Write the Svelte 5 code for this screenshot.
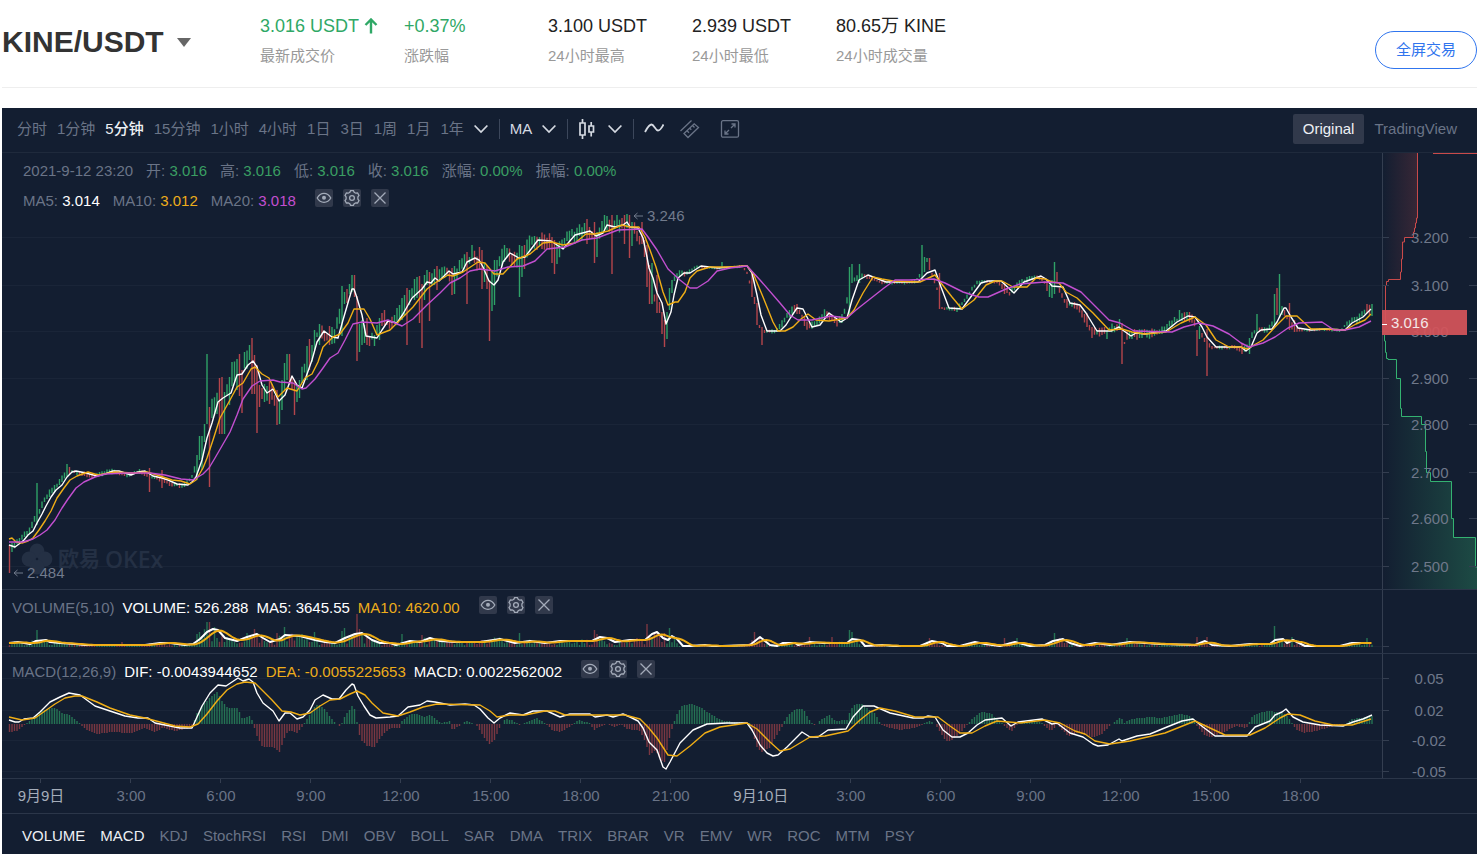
<script lang="ts">
  type Point = [number, number];

  const stats = [
    { value: '3.016 USDT', label: '最新成交价', up: true, arrow: true },
    { value: '+0.37%', label: '涨跌幅', up: true },
    { value: '3.100 USDT', label: '24小时最高' },
    { value: '2.939 USDT', label: '24小时最低' },
    { value: '80.65万 KINE', label: '24小时成交量' },
  ];

  const intervals = ['分时', '1分钟', '5分钟', '15分钟', '1小时', '4小时', '1日', '3日', '1周', '1月', '1年'];
  const views = ['Original', 'TradingView'];
  const indicators = ['VOLUME', 'MACD', 'KDJ', 'StochRSI', 'RSI', 'DMI', 'OBV', 'BOLL', 'SAR', 'DMA',
    'TRIX', 'BRAR', 'VR', 'EMV', 'WR', 'ROC', 'MTM', 'PSY'];
  const times = ['9月9日', '3:00', '6:00', '9:00', '12:00', '15:00', '18:00', '21:00',
    '9月10日', '3:00', '6:00', '9:00', '12:00', '15:00', '18:00'];
  const ohlc = [['开', '3.016'], ['高', '3.016'], ['低', '3.016'], ['收', '3.016'], ['涨幅', '0.00%'], ['振幅', '0.00%']];

  let interval = $state('5分钟');
  let view = $state('Original');
  let shown = $state(['VOLUME', 'MACD']);

  function toggle(name: string) {
    shown = shown.includes(name) ? shown.filter(n => n !== name) : [...shown, name];
  }

  // All series share one canvas space: x 2-1382, y 153-778
  const points = (s: string): Point[] => s.trim().split(/\s+/).map(p => p.split(',').map(Number) as Point);

  const ma5 = points(`9,545 15,547 19,544 24,540 28,535 33,531 37,523 42,514 46,506 51,497 56,490 62,485 67,477 72,472
    76,471 86,473 97,476 105,474 113,471 119,471 131,475 138,472 145,471 153,476 162,478 168,480 177,484 188,485
    192,482 196,477 202,460 207,438 212,423 218,402 223,398 231,393 237,375 242,374 248,365 253,361 257,367 262,385
    267,393 273,389 279,401 285,395 292,376 297,385 302,388 306,377 312,360 317,342 324,331 332,337 338,338 343,320
    352,289 354,289 357,298 362,315 366,336 377,338 382,330 388,321 397,323 403,314 412,298 422,289 427,282 431,283
    435,278 439,281 449,271 453,274 462,272 467,262 475,258 479,260 483,267 489,281 494,285 498,280 503,262 510,253
    519,258 525,257 538,240 551,241 563,249 575,235 590,231 596,236 603,233 607,225 615,227 623,225 627,222 630,227
    638,228 643,238 647,257 649,268 653,278 657,293 662,303 666,324 671,312 674,295 678,278 684,273 690,273 701,266
    718,268 747,266 752,273 757,295 761,315 767,331 780,331 786,325 791,317 797,308 803,309 808,319 812,327 820,325
    829,313 841,322 847,318 852,300 859,280 868,275 886,282 918,282 927,273 935,270 941,287 949,308 962,309 970,298
    981,283 988,281 1001,281 1014,293 1024,282 1041,276 1046,279 1052,286 1063,287 1070,303 1080,305 1086,313
    1097,331 1111,331 1119,327 1124,331 1131,336 1136,333 1145,334 1166,331 1177,322 1188,316 1195,317 1202,327
    1207,337 1216,347 1241,347 1246,351 1251,347 1257,333 1261,330 1272,329 1277,322 1284,308 1286,308 1291,317
    1298,328 1311,330 1325,329 1345,330 1352,323 1363,317 1371,309`);

  const ma10 = points(`9,539 12,538 16,542 22,543 28,541 33,538 39,530 45,521 51,511 57,498 64,488 70,480 77,476 88,472
    98,475 115,472 133,473 147,472 160,476 172,480 181,481 190,484 196,480 203,468 207,458 213,440 220,418 230,400
    237,387 243,383 251,369 255,367 262,374 269,378 278,397 287,388 297,391 305,378 312,374 318,362 323,347 333,337
    340,334 348,323 354,309 364,309 370,319 377,335 390,330 402,318 413,307 427,289 435,283 448,275 453,276 463,272
    478,262 485,263 494,274 503,274 517,259 530,254 543,243 552,242 563,245 575,243 586,234 595,234 608,231 622,225
    630,227 639,227 645,237 650,250 656,267 663,292 668,305 675,302 678,302 685,292 690,278 697,271 710,267 727,267
    747,266 753,273 763,297 773,322 778,331 785,331 793,327 801,319 808,314 816,320 829,321 847,318 854,310 863,293
    873,277 882,279 893,281 920,282 935,275 941,283 952,297 962,309 974,300 986,285 995,281 1002,281 1013,287
    1027,287 1036,278 1045,279 1052,282 1059,283 1066,292 1077,298 1093,313 1109,330 1122,329 1132,332 1145,334
    1166,332 1181,323 1195,317 1206,325 1216,340 1229,347 1240,347 1247,349 1254,345 1263,340 1275,327 1286,316
    1297,316 1311,329 1325,329 1345,330 1356,324 1365,320 1371,314`);

  const ma20 = points(`9,542 23,542 33,539 40,535 47,530 55,520 62,508 68,499 76,488 84,482 95,477 105,474 125,473
    150,473 165,475 181,479 193,480 203,474 209,468 215,458 230,432 237,415 243,399 252,386 260,381 273,380 280,382
    293,383 302,389 306,388 315,379 323,368 330,358 338,353 345,340 353,324 362,322 377,323 388,320 402,326 413,319
    427,305 440,293 450,283 460,278 470,271 480,269 495,271 508,267 523,266 535,261 547,249 565,247 582,240 597,238
    618,230 642,229 648,237 657,250 668,269 680,280 690,288 697,288 708,281 717,271 730,268 747,266 760,280 780,303
    790,315 798,320 812,320 831,316 847,318 856,310 870,299 884,288 895,280 909,280 934,279 945,283 963,292 979,297
    988,297 1006,289 1020,284 1045,282 1063,283 1081,292 1095,306 1109,320 1120,323 1134,331 1172,332 1184,327
    1199,323 1213,326 1229,334 1241,343 1249,347 1263,343 1275,337 1288,328 1299,323 1322,322 1334,330 1345,330
    1359,327 1371,321`);

  // typical candle half-height along the session
  const spread = points(`9,4 30,3 60,3 75,2 150,2 192,3 200,14 260,12 300,8 340,8 380,5 400,8 450,6 480,9 560,8 638,8
    672,5 690,1 750,1 765,1 785,4 820,4 850,4 865,2 875,1 920,2 945,1 965,3 985,1 1005,3 1040,2 1090,4 1150,5 1165,3
    1195,5 1212,1 1238,2 1265,3 1292,3 1302,1 1345,1 1352,4 1371,5`);

  // candles that stand out: x, high, low, colour
  const outliers = `9,545,573,r 11.5,543,552,g 36.5,483,525,g 66.5,464,476,g 69,467,474,r 149,468,492,r 161.5,470,488,r
    196.5,455,480,g 199,436,460,g 201.5,436,470,g 204,424,442,g 206.5,354,424,g 209,407,487,r 219,378,434,r
    221.5,377,434,r 224,392,434,g 229,377,405,g 236.5,359,390,g 239,354,396,r 241.5,370,413,r 249,345,360,g
    251.5,338,394,r 254,355,394,r 256.5,365,433,r 259,385,407,r 261.5,388,399,r 264,384,402,g 269,380,404,r
    276.5,390,425,r 279,400,424,g 281.5,380,410,g 284,363,390,g 286.5,354,380,g 289,354,385,r 291.5,376,390,r
    294,380,415,r 296.5,386,402,g 299,380,398,g 306.5,346,380,g 309,339,370,r 311.5,345,362,g 314,330,350,g
    319,324,345,g 329,326,345,r 331.5,327,344,g 341.5,286,336,g 344,292,304,g 346.5,289,303,r 349,284,294,g
    351.5,275,292,g 354,275,297,r 356.5,296,361,r 359,324,352,g 361.5,320,345,g 364,325,343,g 366.5,318,345,r
    369,336,346,r 374,335,346,g 379,318,340,g 381.5,313,326,r 384,310,325,r 399,305,320,g 401.5,298,320,g
    404,295,316,g 406.5,288,345,r 409,290,305,g 414,279,300,g 416.5,277,298,g 419,276,323,r 421.5,284,348,r
    424,275,300,g 426.5,270,285,g 429,272,321,r 434,269,285,g 436.5,266,290,r 451.5,268,295,r 454,266,294,g
    466.5,252,304,r 471.5,245,260,g 479,247,270,r 481.5,250,289,r 484,263,282,g 486.5,265,289,r 489,280,341,r
    491.5,272,311,g 494,260,305,g 504,245,262,g 519,245,297,g 521.5,246,277,g 524,245,269,r 539,237,246,g
    551.5,237,263,r 554,240,274,r 556.5,245,264,g 586.5,219,244,r 594,222,263,r 596.5,232,257,g 604,215,232,g
    606.5,216,230,g 611.5,215,274,r 616.5,215,228,g 624,215,244,r 626.5,214,228,g 629,215,258,r 631.5,222,246,g
    641.5,222,244,r 644,240,257,r 646.5,245,287,r 649,265,304,r 651.5,263,304,g 656.5,275,313,r 659,302,313,r
    661.5,312,334,r 664,320,347,r 666.5,312,339,g 669,288,310,g 671.5,280,293,g 721.5,262,268,g 751.5,273,297,r
    754,297,304,r 756.5,303,325,r 759,325,328,r 761.5,327,345,r 849,267,315,g 851.5,264,283,g 859,264,283,g
    921.5,245,280,g 924,257,272,g 926.5,258,262,g 929,258,270,r 939,273,309,r 941.5,307,309,r 1004,282,294,r
    1046.5,281,291,r 1049,285,297,g 1051.5,280,298,g 1054,262,294,g 1056.5,272,282,r 1066.5,299,308,r 1086.5,313,327,r
    1091.5,327,338,r 1106.5,331,339,g 1119,319,330,g 1121.5,323,364,r 1124,342,344,r 1179,310,320,g 1196.5,330,356,r
    1199,326,339,g 1206.5,329,376,r 1241.5,343,354,r 1249,338,354,g 1256.5,314,332,g 1274,294,325,g
    1276.5,288,315,r 1279,274,318,g 1281.5,306,315,g 1289,303,330,r 1294,320,332,r 1366.5,304,313,r 1371.5,304,316,g`;

  const volume5 = points(`9,643 18,642 30,644 36,641 46,640 50,642 60,643 75,644 85,645 145,645 160,643 170,643 185,645
    193,644 200,639 207,632 213,629 218,630 225,638 237,641 247,637 257,634 263,638 270,642 280,639 285,635 300,636
    315,640 325,642 335,643 345,638 355,634 362,633 372,640 380,643 390,643 396,645 410,641 420,642 430,638 440,641
    455,642 480,642 500,639 515,643 530,641 545,643 560,641 592,641 600,637 607,638 615,642 630,640 645,640 652,634
    657,632 663,638 668,640 672,636 677,639 683,646 690,646 705,645 712,646 722,646 750,645 760,637 770,645 777,646
    783,643 795,643 798,645 810,642 823,643 847,643 852,639 860,640 865,646 883,645 893,646 920,646 932,641 942,643
    947,646 960,646 975,642 985,644 1000,646 1015,642 1030,646 1045,645 1053,641 1063,639 1070,643 1080,646
    1095,643 1110,645 1130,642 1160,644 1195,645 1205,641 1212,645 1230,646 1250,644 1270,644 1275,640 1283,639
    1287,643 1293,640 1305,646 1340,646 1352,643 1371,643`);

  const volumeSpikes = `36.5,630,g 121.5,642,r 196.5,634,g 199,632,g 206.5,622,g 209,622,r 214,627,g 246.5,633,g 254,629,r
    276.5,633,r 284,627,g 301.5,634,g 314,632,g 341.5,631,g 344,628,g 356.5,614,r 359,629,r 401.5,634,g 421.5,635,r
    519,633,g 594,630,r 596.5,634,r 646.5,624,r 664,633,r 669,628,g 754,632,r 809,637,r 831.5,637,r 849,630,g
    851.5,632,g 929,638,r 1004,638,r 1016.5,638,g 1054,633,g 1126.5,638,g 1196.5,637,r 1206.5,637,r 1274,626,g
    1291.5,637,g 1366.5,638,g`;

  const dif = points(`9,720 15,722 19,722 24,719 33,718 40,712 50,702 60,697 69,693 80,695 95,706 110,711 125,716
    138,718 148,718 155,723 170,726 180,728 192,728 197,717 202,706 210,693 218,685 226,686 232,682 238,678 243,681
    249,679 253,682 257,693 263,703 273,711 279,721 285,713 290,713 297,719 303,717 310,710 315,700 323,695 332,699
    339,699 346,690 352,684 354,685 358,696 364,706 370,715 376,718 390,717 398,716 408,707 420,705 427,701 435,702
    450,705 465,704 474,705 480,709 488,718 494,723 500,718 510,713 523,715 533,711 547,711 560,717 570,714 590,714
    595,717 607,715 613,717 623,714 630,717 638,721 643,728 649,742 657,750 663,767 666,769 670,762 680,743 693,730
    707,724 727,723 747,723 752,730 760,745 767,753 773,756 778,755 787,747 802,732 810,737 818,737 828,730 846,729
    853,717 863,706 874,706 890,713 913,718 923,718 928,716 935,717 943,730 952,737 960,737 968,733 977,725 985,720
    1002,718 1011,726 1018,722 1042,719 1052,724 1057,723 1070,733 1083,737 1093,744 1098,746 1108,745 1119,739
    1122,741 1137,736 1150,734 1167,727 1182,721 1193,719 1203,727 1215,736 1247,736 1255,727 1270,721 1275,715
    1282,712 1286,709 1293,717 1303,722 1320,725 1343,726 1353,722 1363,719 1372,715`);

  const dea = points(`9,717 22,720 35,718 45,711 55,704 65,698 75,696 82,696 97,702 110,708 130,715 145,718 160,722
    175,726 190,727 198,724 207,714 217,701 227,690 237,684 245,682 255,683 262,690 272,700 282,711 291,712 300,715
    310,713 320,706 330,700 340,699 350,694 357,691 365,695 372,703 383,713 398,716 410,712 423,707 437,704 480,705
    490,711 497,717 510,715 525,715 545,711 555,711 565,715 625,715 640,719 648,727 657,738 668,755 677,756 690,746
    705,733 720,727 747,723 757,729 770,742 780,751 790,749 810,737 825,736 848,731 860,720 870,712 880,708 895,711
    915,717 938,717 950,726 960,733 972,733 985,726 997,721 1020,723 1045,720 1060,723 1075,731 1085,734 1095,741
    1110,744 1130,741 1165,733 1180,727 1195,721 1210,728 1225,735 1250,735 1265,728 1280,718 1288,714 1300,715
    1315,721 1333,725 1352,725 1371,719`);

  const histogram = points(`9,732 17,731 22,727 25,724 30,720 37,713 47,709 55,708 62,713 70,715 75,720 80,724 85,729
    90,732 97,734 110,732 130,733 145,728 155,732 162,728 175,731 190,728 193,723 197,712 205,702 212,695 217,692
    222,702 228,708 237,708 242,719 250,715 253,724 256,735 262,747 273,747 279,752 283,740 286,733 290,730 297,733
    302,726 306,720 313,708 318,704 325,710 332,720 340,727 344,717 352,705 355,711 357,726 360,740 367,746 374,747
    380,737 390,728 399,728 402,720 410,714 417,714 423,717 430,715 440,723 449,721 452,730 457,727 465,721 475,724
    482,735 489,744 494,740 498,730 505,718 513,721 519,725 527,722 537,718 545,724 552,730 560,732 570,726 578,720
    590,723 593,730 605,724 615,727 620,724 627,729 640,731 646,745 649,755 655,750 660,760 664,762 668,742 673,724
    676,715 681,706 690,704 700,707 710,714 720,720 735,722 750,723 752,733 757,748 761,752 769,748 775,737 781,728
    785,718 795,709 803,709 808,719 815,726 820,720 829,715 835,721 847,720 850,710 855,704 862,704 868,709 875,714
    880,724 885,727 900,730 915,728 930,720 937,727 943,738 948,742 956,737 966,726 972,718 980,712 990,713
    1000,722 1011,732 1017,724 1027,722 1040,722 1050,731 1057,725 1068,736 1078,733 1092,737 1100,735 1109,726
    1120,717 1124,723 1130,719 1150,717 1160,718 1180,714 1190,716 1197,727 1205,736 1212,737 1222,733 1235,726
    1246,728 1252,716 1262,712 1270,711 1285,714 1290,720 1295,729 1303,733 1315,731 1330,727 1345,724 1352,719
    1371,716`);

  const STEP = 2.5;
  const COUNT = 546;
  const VOLUME_BASE = 647;
  const MACD_ZERO = 724;
  const xs = Array.from({ length: COUNT }, (_, i) => 9 + i * STEP);

  function at(series: Point[], x: number) {
    const i = series.findIndex(p => p[0] >= x);
    if (i === -1) return series[series.length - 1][1];
    if (i === 0) return series[0][1];
    const [x0, y0] = series[i - 1];
    const [x1, y1] = series[i];
    return y0 + (y1 - y0) * (x - x0) / (x1 - x0);
  }

  function noise(n: number) {
    const v = Math.sin(n * 12.9898) * 43758.5453;
    return v - Math.floor(v);
  }

  const keyed = (s: string) => new Map(s.trim().split(/\s+/).map(r => {
    const [x, ...rest] = r.split(',');
    return [Math.round((+x - 9) / STEP), rest] as [number, string[]];
  }));

  type Bars = { g: string; r: string };
  const candles: Bars = { g: '', r: '' };
  const volumes: Bars = { g: '', r: '' };
  const macd: Bars = { g: '', r: '' };
  const bar = (x: number, y0: number, y1: number) => `M${x + .5} ${y0.toFixed(1)}V${y1.toFixed(1)}`;

  const bigCandles = keyed(outliers);
  const bigVolumes = keyed(volumeSpikes);

  xs.forEach((x, i) => {
    let side: 'g' | 'r';
    const big = bigCandles.get(i);
    if (big) {
      side = big[2] as 'g' | 'r';
      candles[side] += bar(x, +big[0], +big[1]);
    } else {
      // the average lags price by about two candles
      const mid = at(ma5, x + 5);
      const slope = at(ma5, x + 7) - at(ma5, x + 2);
      const size = at(spread, x);
      side = slope / 4 + noise(i + 7) - .5 < 0 ? 'g' : 'r';
      candles[side] += bar(x, mid - size * (.2 + noise(i)), mid + size * (.1 + noise(i + 900)) + 1);
    }

    const spike = bigVolumes.get(i);
    const height = VOLUME_BASE - at(volume5, x + 3);
    if (spike) volumes[spike[1] as 'g' | 'r'] += bar(x, +spike[0], VOLUME_BASE);
    else volumes[side] += bar(x, VOLUME_BASE - height * (.3 + noise(i + 300)), VOLUME_BASE);

    const y = Math.round(at(histogram, x));
    macd[y <= MACD_ZERO ? 'g' : 'r'] += bar(x, MACD_ZERO, y);
  });

  const line = (series: Point[]) => series.map(p => p.join(',')).join(' ');
  const volume10 = xs.map((x): Point => {
    let sum = 0;
    for (let k = 0; k < 6; k++) sum += at(volume5, Math.max(9, x - k * STEP));
    return [x, +(sum / 6).toFixed(1)];
  });

  const prices = [['3.200', 237], ['3.100', 285], ['3.000', 331], ['2.900', 378], ['2.800', 424], ['2.700', 472], ['2.600', 518], ['2.500', 566]] as [string, number][];
  const macdScale = [['0.05', 678], ['0.02', 710], ['-0.02', 740], ['-0.05', 771]] as [string, number][];

  const marks = [
    { text: '3.246', x: 633, y: 216 },
    { text: '2.484', x: 13, y: 573 },
  ];
  const left = (x: number) => `${(x - 2) / 1380 * 100}%`;
</script>

{#snippet chevron()}
  <svg class="chevron" width="14" height="10" viewBox="0 0 14 10" aria-hidden="true"><path d="M.6 1.500 7 8l6.400-6.500" /></svg>
{/snippet}

{#snippet tools(name: string)}
  <span class="tools">
    <button aria-label="{name} 显示">
      <svg width="18" height="18" viewBox="0 0 18 18">
        <path d="M2.200 9C4 5.800 6.300 4.400 9 4.400S14 5.800 15.800 9C14 12.200 11.700 13.300 9 13.300S4 12.200 2.200 9Z" />
        <circle cx="9" cy="8.800" r="2" fill="currentColor" stroke="none" />
      </svg>
    </button>
    <button aria-label="{name} 设置">
      <svg width="18" height="18" viewBox="0 0 18 18">
        <path d="M6.800 3.400 7.600 1.700h2.800l.8 1.700 1.500.8 1.900-.2 1.400 2.400-1.100 1.600v2l1.100 1.600-1.400 2.400-1.900-.2-1.500.8-.8 1.700H7.600l-.8-1.700-1.500-.8-1.900.2L2 11.600 3.100 10V8L2 6.400 3.400 4l1.900.2Z" />
        <circle cx="9" cy="9" r="2.400" />
      </svg>
    </button>
    <button aria-label="{name} 关闭">
      <svg width="18" height="18" viewBox="0 0 18 18"><path d="m3.500 3.500 11 11m0-11-11 11" /></svg>
    </button>
  </span>
{/snippet}

<div class="page">
  <header>
    <h1><button>KINE/USDT <i class="caret"></i></button></h1>
    <dl>
      {#each stats as { value, label, up, arrow }}
        <div>
          <dd class:up>
            {value}
            {#if arrow}
              <svg width="14" height="16" viewBox="0 0 14 16" aria-hidden="true"><path d="M7 15.500V2M1.500 7 7 1.500 12.500 7" /></svg>
            {/if}
          </dd>
          <dt>{label}</dt>
        </div>
      {/each}
    </dl>
    <a class="fullscreen" href="#trade">全屏交易</a>
  </header>

  <main>
    <nav class="toolbar">
      {#each intervals as name}
        <button class:active={name === interval} onclick={() => (interval = name)}>{name}</button>
      {/each}
      <button class="light" aria-label="更多周期">{@render chevron()}</button>
      <i class="sep"></i>
      <button class="light menu">MA {@render chevron()}</button>
      <i class="sep"></i>
      <button class="light menu" aria-label="图表类型">
        <svg width="20" height="22" viewBox="0 0 20 22" stroke-width="1.700" aria-hidden="true">
          <path d="M2 5h5v12H2zM4.500 1v4m0 12v4M11 8h4.500v6H11zM13.200 4v4m0 6v4.500" />
        </svg>
        {@render chevron()}
      </button>
      <i class="sep"></i>
      <button class="light" aria-label="画线">
        <svg width="20" height="20" viewBox="0 0 20 20" stroke-width="1.800"><path d="M1 13C3.500 8.500 5 5.500 7.500 5.500S11.500 11.500 14 11.500s3.500-2.500 5.500-6" /></svg>
      </button>
      <button class="ruler" aria-label="测量">
        <svg width="20" height="20" viewBox="0 0 20 20" stroke-width="1.300">
          <path d="M.5 12 11.500 1.500M4 14.500 14.200 4.800 18.500 8.500 8 18.500ZM7 11.800l2 2m.8-4.600 1.500 1.500m1.200-4.200 2 2" />
        </svg>
      </button>
      <button class="expand" aria-label="全屏">
        <svg width="20" height="20" viewBox="0 0 20 20" stroke-width="1.300">
          <rect x="1.500" y="1.700" width="17" height="16.500" rx="1.500" />
          <path d="m11 9 4-4m-3.500 0H15v3.500M9 11l-4 4m0-3.500V15h3.500" />
        </svg>
      </button>
      <div class="views">
        {#each views as name}
          <button class:active={name === view} onclick={() => (view = name)}>{name}</button>
        {/each}
      </div>
    </nav>

    <section class="pane price">
      <div class="plot">
        <svg class="chart" viewBox="2 153 1380 436" preserveAspectRatio="none" aria-label="K线图">
          {#each prices as [, y]}
            <path class="grid" d="M2 {y + .5}H1382" />
          {/each}
          <path class="bar rise" d={candles.g} />
          <path class="bar fall" d={candles.r} />
          <polyline class="white" points={line(ma5)} />
          <polyline class="yellow" points={line(ma10)} />
          <polyline class="purple" points={line(ma20)} />
        </svg>
        <div class="watermark">
          <svg width="32" height="32" viewBox="0 0 32 32" aria-hidden="true">
            <circle cx="16" cy="8" r="7.400" /><circle cx="8" cy="16" r="7.400" />
            <circle cx="24" cy="16" r="7.400" /><circle cx="16" cy="24" r="7.400" />
            <path class="hole" d="M16 14.500 17.500 16 16 17.500 14.500 16Z" />
          </svg>
          <b>欧易</b> <span>OKEx</span>
        </div>
        {#each marks as { text, x, y }}
          <span class="mark" style:left={left(x)} style:top="{y - 163}px">
            <svg width="10" height="8" viewBox="0 0 10 8" aria-hidden="true"><path d="M10 4H1M4.500 1 1 4l3.500 3" /></svg>
            {text}
          </span>
        {/each}
        <div class="legend wide">
          <p>
            <span>2021-9-12 23:20</span>
            {#each ohlc as [name, value]}
              <span>{name}: <em class="g">{value}</em></span>
            {/each}
          </p>
          <p>
            <span>MA5: <em class="w">3.014</em></span>
            <span>MA10: <em class="y">3.012</em></span>
            <span>MA20: <em class="p">3.018</em></span>
            {@render tools('MA')}
          </p>
        </div>
      </div>
      <svg class="axis" viewBox="1382 153 95 436" width="95" height="436">
        <defs>
          <linearGradient id="bids"><stop offset="0" stop-color="#2f9e68" stop-opacity="0" /><stop offset="1" stop-color="#2f9e68" stop-opacity=".35" /></linearGradient>
          <linearGradient id="asks"><stop offset="0" stop-color="#c94a4a" stop-opacity="0" /><stop offset="1" stop-color="#c94a4a" stop-opacity=".2" /></linearGradient>
        </defs>
        <path class="area" fill="url(#asks)" d="M1383 153H1418V218L1415 228 1414 237H1404L1403 259 1400 262V279H1388L1385 286V310H1383Z" />
        <path class="asks" d="M1417.500 153V218H1416.500V223H1415.500V228H1414.500V232H1413.500V237.500H1404.500V242H1402.500V259H1401.500V272H1400.500V279.500H1388.500V281.500H1386.500V285.500H1385.500V322M1433 153.500H1477" />
        <path class="area" fill="url(#bids)" d="M1383 335L1385 352 1387 360H1396V378H1400V408L1401 416H1421V424L1425 425V451L1427 472 1430 473V481H1451V518H1453V537H1475V567H1477V589H1383Z" />
        <path class="bids" d="M1384.500 335V341H1385.500V352.500H1386.500V358.500H1388V359.500H1396.500V378.500H1400.500V408.500H1401.500V416.500H1421.500V424.500H1425.500V451.500H1426.500V472.500H1430.500V481.500H1451.500V518.500H1453.500V537.500H1475.500V567H1477" />
        {#each prices as [text, y]}
          <path class="tick" d="M1383 {y + .5}h6M1469 {y + .5}h8" />
          <text x="1411" y={y + 6}>{text}</text>
        {/each}
        <rect class="tag" x="1382" y="310" width="85" height="25" />
        <path class="dash" d="M1382 324.500h5" />
        <text class="last" x="1391" y="328">3.016</text>
      </svg>
    </section>

    <section class="pane volume">
      <div class="plot">
        <svg class="chart" viewBox="2 590 1380 63" preserveAspectRatio="none" aria-label="成交量">
          <path class="grid" d="M2 646.500H1382" />
          <path class="bar rise dim" d={volumes.g} />
          <path class="bar fall dim" d={volumes.r} />
          <polyline class="white thick" points={line(volume5)} />
          <polyline class="yellow thick" points={line(volume10)} />
        </svg>
        <div class="legend">
          <p>
            <span>VOLUME(5,10)</span>
            <em class="w">VOLUME: 526.288</em>
            <em class="w">MA5: 3645.55</em>
            <em class="y">MA10: 4620.00</em>
            {@render tools('VOLUME')}
          </p>
        </div>
      </div>
      <svg class="axis" viewBox="1382 590 95 63" width="95" height="63">
        <path class="tick" d="M1383 646.500h6" />
      </svg>
    </section>

    <section class="pane macd">
      <div class="plot">
        <svg class="chart" viewBox="2 654 1380 124" preserveAspectRatio="none" aria-label="MACD">
          {#each macdScale as [, y]}
            <path class="grid" d="M2 {y + .5}H1382" />
          {/each}
          <path class="bar rise dim" d={macd.g} />
          <path class="bar fall dim" d={macd.r} />
          <polyline class="white" points={line(dif)} />
          <polyline class="yellow" points={line(dea)} />
        </svg>
        <div class="legend">
          <p>
            <span>MACD(12,26,9)</span>
            <em class="w">DIF: -0.0043944652</em>
            <em class="y">DEA: -0.0055225653</em>
            <em class="w">MACD: 0.0022562002</em>
            {@render tools('MACD')}
          </p>
        </div>
      </div>
      <svg class="axis" viewBox="1382 654 95 124" width="95" height="124">
        {#each macdScale as [text, y]}
          <path class="tick" d="M1383 {y + .5}h6" />
          <text class="mid" x="1429" y={y + 6}>{text}</text>
        {/each}
      </svg>
    </section>

    <ol class="times">
      {#each times as time}
        <li class:day={time.includes('月')}>{time}</li>
      {/each}
    </ol>

    <nav class="indicators">
      {#each indicators as name}
        <button class:active={shown.includes(name)} onclick={() => toggle(name)}>{name}</button>
      {/each}
    </nav>
  </main>
</div>

<style>
  :global(body) {
    background: #fff;
    font-family: 'Liberation Sans', 'Noto Sans CJK SC', sans-serif;
    font-size: 15px;
    line-height: 20px;
  }

  .page {
    margin-left: 2px;
  }

  button {
    padding: 0;
    border: 0;
    background: none;
    color: inherit;
    font: inherit;
    cursor: pointer;
  }

  svg {
    display: block;
    fill: none;
    stroke: currentColor;
  }

  em {
    font-style: normal;
  }

  header {
    display: flex;
    height: 87px;
    margin-bottom: 20px;
    border-bottom: 1px solid #eee;
  }

  h1 {
    flex: 0 0 258px;
    margin: 24px 0 0;
    font-size: 30px;
    line-height: 36px;
    color: #333;
  }

  h1 button {
    display: flex;
    align-items: center;
    gap: 13px;
  }

  .caret {
    border: 7px solid transparent;
    border-top: 9px solid #666;
    border-bottom: 0;
  }

  dl {
    flex: 1;
    display: flex;
    margin: 14px 0 0;
  }

  dl div {
    flex: 0 0 144px;
    display: flex;
    flex-direction: column;
    gap: 6px;
  }

  dd {
    display: flex;
    align-items: center;
    gap: 5px;
    margin: 0;
    font-size: 18px;
    line-height: 24px;
    color: #222;
    white-space: nowrap;
  }

  dd.up {
    color: #2fa866;
  }

  dd svg {
    stroke-width: 2.4;
  }

  dt {
    color: #999;
    line-height: 24px;
  }

  .fullscreen {
    align-self: flex-start;
    margin-top: 31px;
    padding: 0 20px;
    border: 1px solid #3075ee;
    border-radius: 19px;
    line-height: 36px;
    color: #3075ee;
    text-decoration: none;
    white-space: nowrap;
  }

  main {
    background: #131e31;
    color: #6a7487;
  }

  .toolbar {
    display: flex;
    align-items: center;
    gap: 10px;
    height: 42px;
    padding: 0 20px 2px 15px;
    border-bottom: 1px solid #1f2a3c;
    white-space: nowrap;
  }

  .toolbar .active,
  .indicators .active {
    color: #edf0f4;
    font-weight: 500;
  }

  .light {
    color: #d5dae2;
  }

  .chevron {
    stroke-width: 1.7;
  }

  .menu {
    display: flex;
    align-items: center;
    gap: 10px;
  }

  .sep {
    width: 1px;
    height: 20px;
    margin-left: 1px;
    background: #3c475b;
  }

  .ruler {
    margin-left: 6px;
  }

  .expand {
    margin-left: 10px;
  }

  .views {
    display: flex;
    margin-left: auto;
  }

  .views button {
    padding: 5px 0 5px 10px;
  }

  .views .active {
    padding: 5px 10px;
    border-radius: 2px;
    background: #31394b;
  }

  .pane {
    display: flex;
    border-bottom: 1px solid #2b3649;
  }

  .plot {
    position: relative;
    flex: 1;
    min-width: 0;
  }

  .chart {
    width: 100%;
  }

  .price .chart {
    height: 436px;
  }

  .volume .chart {
    height: 63px;
  }

  .macd .chart {
    height: 124px;
  }

  .axis {
    flex: none;
    overflow: visible;
    box-shadow: inset 1px 0 #343e50;
  }

  .area {
    stroke: none;
  }

  .grid {
    stroke: #1a2538;
  }

  .tick {
    stroke: #343e50;
  }

  .bar {
    stroke-width: 1.4;
  }

  .rise {
    stroke: #2fa267;
  }

  .fall {
    stroke: #b4454b;
  }

  .dim {
    opacity: 0.65;
  }

  polyline {
    stroke-width: 1.4;
    stroke-linejoin: round;
  }

  .thick {
    stroke-width: 2;
  }

  .white {
    stroke: #fff;
  }

  .yellow {
    stroke: #f0ae16;
  }

  .purple {
    stroke: #c24fd0;
  }

  .asks {
    stroke: #c94a4a;
  }

  .bids {
    stroke: #34b271;
  }

  text {
    fill: #6f788a;
    stroke: none;
  }

  .mid {
    text-anchor: middle;
  }

  .tag {
    fill: #d5545a;
    fill-opacity: 0.93;
    stroke: none;
  }

  .dash {
    stroke: #fff;
  }

  .last {
    fill: #f4e6e7;
  }

  .legend {
    position: absolute;
    top: 5px;
    left: 10px;
  }

  .wide {
    left: 21px;
  }

  .legend p {
    display: flex;
    align-items: center;
    gap: 8px;
    height: 26px;
    margin: 0;
    white-space: nowrap;
  }

  .wide p {
    gap: 13px;
  }

  .wide p + p {
    margin-top: 4px;
  }

  .tools {
    display: flex;
    gap: 10px;
    margin-left: 11px;
    padding-bottom: 6px;
    color: #a3abb9;
  }

  .wide .tools {
    margin-left: 6px;
  }

  .tools button {
    border-radius: 2px;
    background: #31394b;
  }

  .tools svg {
    stroke-width: 1.3;
  }

  .w {
    color: #fff;
  }

  .y {
    color: #edad1b;
  }

  .p {
    color: #c24fd0;
  }

  .g {
    color: #3a9e63;
  }

  .mark {
    position: absolute;
    display: flex;
    align-items: center;
    gap: 4px;
    color: #717a8c;
  }

  .watermark {
    position: absolute;
    left: 19px;
    bottom: 14px;
    display: flex;
    align-items: center;
    gap: 5px;
    color: #243044;
    font-size: 21px;
    line-height: 32px;
  }

  .watermark span {
    font-family: 'Open Sans', sans-serif;
    font-size: 23px;
    font-weight: 600;
  }

  .watermark svg {
    fill: currentColor;
    stroke: none;
  }

  .watermark .hole {
    fill: #131e31;
  }

  .times {
    display: flex;
    height: 34px;
    margin: 0 95px 0 0;
    padding: 0;
    list-style: none;
    line-height: 34px;
    text-align: center;
  }

  .times li {
    flex: 0 0 6.5217%;
    background: linear-gradient(#343e50, #343e50) center top / 1px 4px no-repeat;
  }

  .times li:first-child {
    margin-left: -6px;
  }

  .times .day {
    color: #a5adba;
  }

  .indicators {
    display: flex;
    flex-wrap: wrap;
    gap: 0 15px;
    padding: 3px 20px 0;
    border-top: 1px solid #2b3649;
    line-height: 38px;
  }
</style>
